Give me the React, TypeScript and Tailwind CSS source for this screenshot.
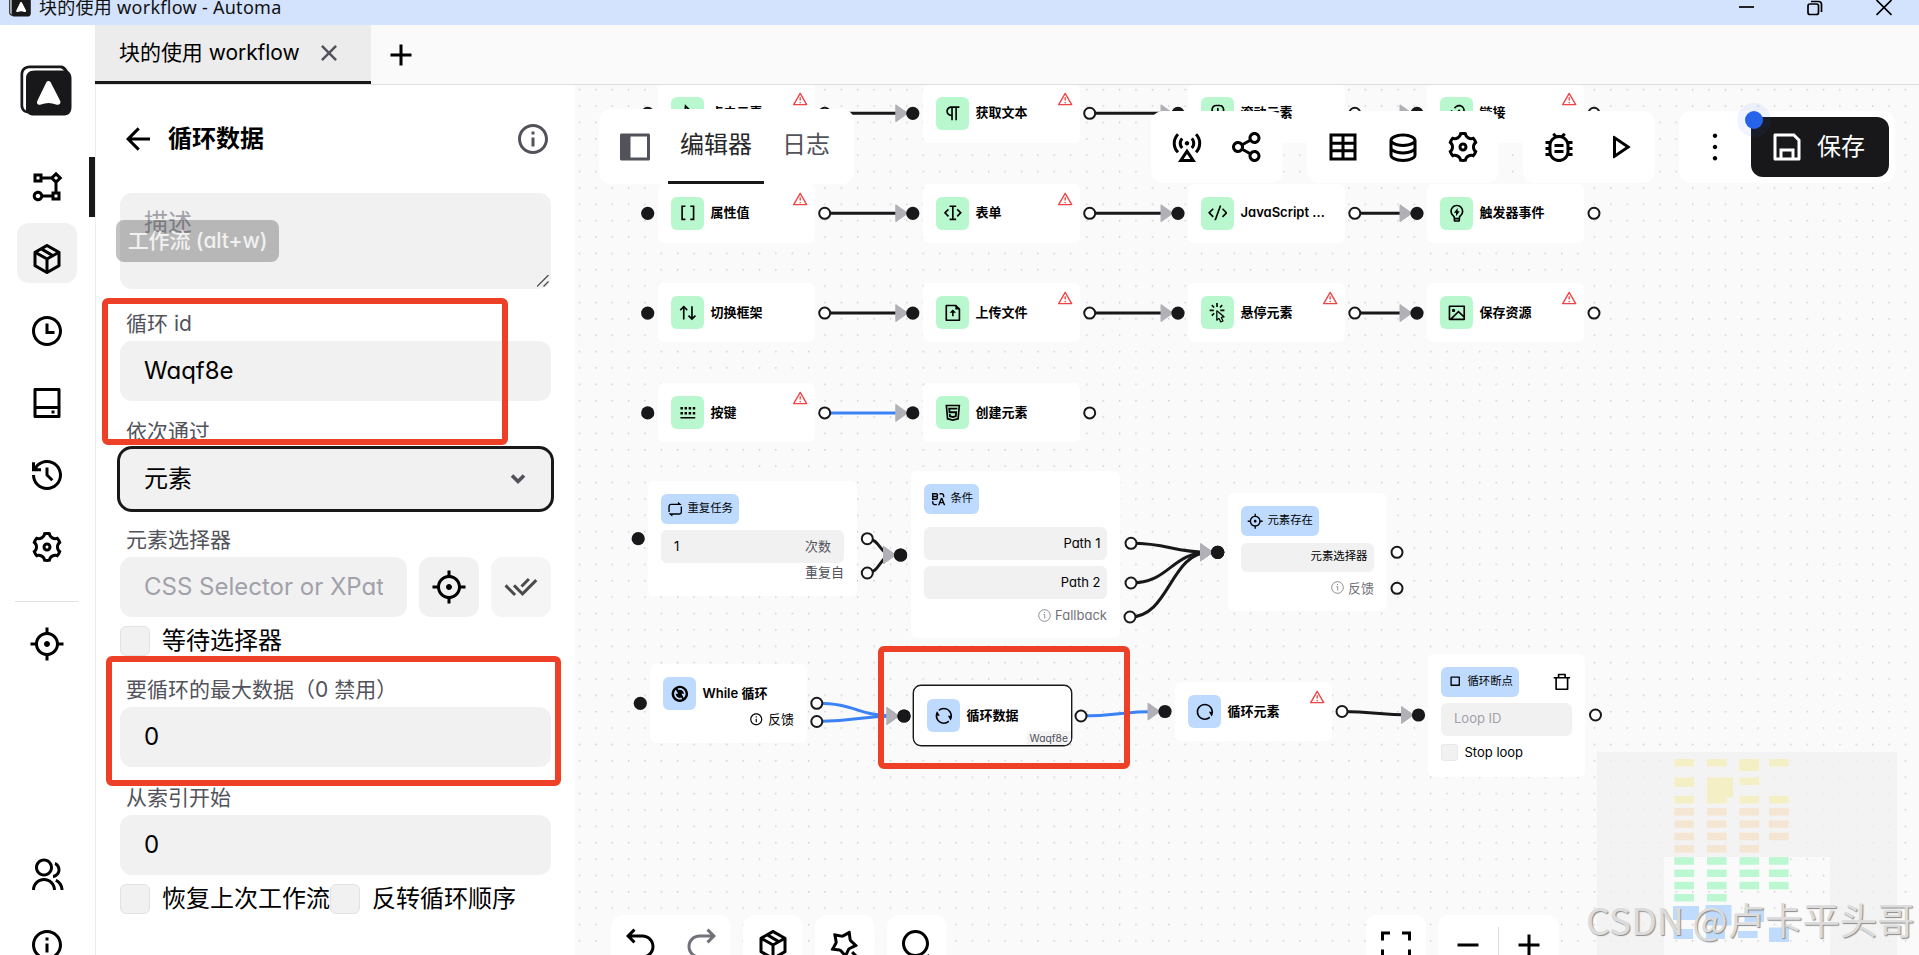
import React from 'react';
import clsx from 'clsx';
import type { IconType } from 'react-icons';
import {
  RiAB, RiAddLine, RiAlertLine, RiArrowGoBackLine, RiArrowGoForwardLine, RiArrowLeftLine, RiArrowUpDownLine,
  RiBaseStationLine, RiBracketsLine, RiBug2Line, RiCheckDoubleLine, RiCloseLine, RiCodeSSlashLine,
  RiCursorLine, RiDatabase2Line, RiDeleteBin7Line, RiFileUploadLine, RiFlowChart, RiFocus3Line,
  RiFullscreenLine, RiGroupLine, RiHardDrive2Line, RiHistoryLine, RiHtml5Line, RiImageLine,
  RiInformationLine, RiInputCursorMove, RiKeyboardLine, RiLightbulbFlashLine, RiLink, RiMagicLine,
  RiMore2Line, RiMouseLine, RiParagraph, RiPlayLine, RiRefreshFill, RiRefreshLine, RiRepeat2Line,
  RiRestartLine, RiSaveLine, RiSearch2Line, RiSettings3Line, RiShareLine, RiSideBarFill, RiStopLine,
  RiSubtractLine, RiTimeLine,
} from 'react-icons/ri';

interface IconProps {
  size?: number | string;
  className?: string;
}

type AnyIcon = IconType | React.FC<IconProps>;

// Window position of the canvas' top left corner
const ORIGIN = { x: 575, y: 85 };

const place = (x: number, y: number, w: number, h: number): React.CSSProperties => ({
  left: x - ORIGIN.x,
  top: y - ORIGIN.y,
  width: w,
  height: h,
});

const PackageIcon: React.FC<IconProps> = ({ size = 24, className }) => (
  <svg width={size} height={size} viewBox="0 0 24 24" fill="currentColor" className={className}>
    <path d="M21,16.5C21,16.88 20.79,17.21 20.47,17.38L12.57,21.82C12.41,21.94 12.21,22 12,22C11.79,22 11.59,21.94 11.43,21.82L3.53,17.38C3.21,17.21 3,16.88 3,16.5V7.5C3,7.12 3.21,6.79 3.53,6.62L11.43,2.18C11.59,2.06 11.79,2 12,2C12.21,2 12.41,2.06 12.57,2.18L20.47,6.62C20.79,6.79 21,7.12 21,7.5V16.5M12,4.15L10.11,5.22L16,8.61L17.96,7.5L12,4.15M6.04,7.5L12,10.85L13.96,9.75L8.08,6.35L6.04,7.5M5,15.91L11,19.29V12.58L5,9.21V15.91M19,15.91V9.21L13,12.58V19.29L19,15.91Z" />
  </svg>
);

const CursorClickIcon: React.FC<IconProps> = ({ size = 24, className }) => (
  <svg width={size} height={size} viewBox="0 0 24 24" fill="currentColor" className={className}>
    <path d="M11.5,11L17.88,16.37L17,16.55L16.36,16.67C15.73,16.8 15.37,17.5 15.65,18.07L15.92,18.65L17.28,21.59L15.86,22.25L14.5,19.32L14.24,18.74C13.97,18.15 13.22,17.97 12.72,18.38L12.21,18.78L11.5,19.35V11M10.76,8.69A0.76,0.76 0 0,0 10,9.45V20.9C10,21.32 10.34,21.66 10.76,21.66C10.95,21.66 11.11,21.6 11.24,21.5L13.15,19.95L14.81,23.57C14.94,23.84 15.21,24 15.5,24C15.61,24 15.72,24 15.83,23.92L18.59,22.64C18.97,22.46 19.15,22 18.95,21.63L17.28,18L19.69,17.55C19.85,17.5 20,17.43 20.12,17.29C20.39,16.97 20.35,16.5 20,16.21L11.26,8.86L11.25,8.87C11.12,8.76 10.95,8.69 10.76,8.69M15,10V8H20V10H15M13.83,4.76L16.66,1.93L18.07,3.34L15.24,6.17L13.83,4.76M10,0H12V5H10V0M3.93,14.66L6.76,11.83L8.17,13.24L5.34,16.07L3.93,14.66M3.93,3.34L5.34,1.93L8.17,4.76L6.76,6.17L3.93,3.34M7,10H2V8H7V10" />
  </svg>
);

const GridIcon: React.FC<IconProps> = ({ size = 24, className }) => (
  <svg width={size} height={size} viewBox="0 0 24 24" fill="none" stroke="currentColor" strokeWidth={2} className={className}>
    <path d="M4 4h16v16H4zM4 9.5h16M4 14.5h16M12 4v16" />
  </svg>
);

const Logo: React.FC<{ className?: string }> = ({ className }) => (
  <svg viewBox="0 0 52 51" className={className}>
    <path d="M10 .5h30c4 0 6 2 8 5.500c3 2 3.500 5 3.500 8v28c0 6-3 8.500-8.500 8.500H14c-3 0-4.500-.5-6-2C3 47.500.5 45 .5 40V10C.5 4 4 .5 10 .5z" fill="#18181b" />
    <path d="M10 3.200h29c2 0 3.500.6 5 2.300H15C8.500 5.500 6 8.500 6 14v31.500c-2-1.200-2.800-3-2.800-5.500V10C3.200 5.500 5.500 3.200 10 3.200z" fill="#fff" />
    <path d="M26.500 17c.8-1.500 3.200-1.500 4 0L40 35.500c1.500 3-1 5-4 4-5-2-10-2-15 0-3 1-5-1-3.500-4z" fill="#fff" />
  </svg>
);

const TitleBar = () => (
  <header className="h-[25px] shrink-0 flex items-start justify-between overflow-hidden bg-[#d3e3fd] pl-[9px] pr-[27px]">
    <div className="flex items-start gap-[8px]">
      <Logo className="-mt-[5px] h-[22px] w-[22px]" />
      <span className="-mt-[5px] whitespace-nowrap text-[18px] leading-[24px] tracking-[0.28px] text-[#111] font-['Noto_Sans','Noto_Sans_CJK_SC',sans-serif]">
        块的使用 workflow - Automa
      </span>
    </div>
    <div className="flex h-4 items-center gap-[53px]">
      <svg width="15" height="16" viewBox="0 0 15 16" stroke="#000" strokeWidth="1.700">
        <path d="M0 7h15" />
      </svg>
      <svg width="16" height="16" viewBox="0 0 16 16" fill="none" stroke="#000" strokeWidth="1.700">
        <rect x="1" y="4" width="10.500" height="10.500" rx="2" />
        <path d="M4 1.500h7.500a3 3 0 0 1 3 3V12" />
      </svg>
      <svg width="16" height="16" viewBox="0 0 16 16" stroke="#000" strokeWidth="1.700">
        <path d="M.5 0l15 15M15.500 0l-15 15" />
      </svg>
    </div>
  </header>
);

const navItems: { icon: AnyIcon; active?: boolean; hovered?: boolean }[] = [
  { icon: RiFlowChart, active: true },
  { icon: PackageIcon, hovered: true },
  { icon: RiTimeLine },
  { icon: RiHardDrive2Line },
  { icon: RiHistoryLine },
  { icon: RiSettings3Line },
];

const Sidebar = () => (
  <aside className="w-24 shrink-0 flex flex-col overflow-hidden border-r border-[#ececec] bg-white pt-10">
    <Logo className="ml-[20px] h-[51px] w-[52px] shrink-0" />
    <nav className="mt-[41px] flex flex-col gap-[12px]">
      {navItems.map(({ icon: Icon, active, hovered }, i) => (
        <div key={i} className="flex h-[60px] shrink-0 items-center justify-between pl-[17px]">
          <div className={clsx('flex h-[60px] w-[60px] items-center justify-center rounded-xl', hovered && '-translate-y-1.5 bg-[#f1f1f1]')}>
            <Icon size={36} className={clsx(hovered && 'translate-y-1.5')} />
          </div>
          {active && <div className="h-[60px] w-[6px] bg-[#18181b]" />}
        </div>
      ))}
    </nav>
    <hr className="mx-[15px] mt-[24px] w-[63px] shrink-0 border-[#e0e0e0]" />
    <RiFocus3Line size={36} className="ml-[29px] mt-[24px] shrink-0" />
    <RiGroupLine size={36} className="ml-[29px] mt-[195px] shrink-0" />
    <RiInformationLine size={36} className="ml-[29px] mt-[34px] shrink-0" />
  </aside>
);

const TabBar = () => (
  <div className="-ml-px h-[60px] shrink-0 flex border-b border-[#dedede] bg-[#fafafa]">
    <div className="flex h-[59px] w-[276px] items-center border-b-[3px] border-[#18181b] bg-[#ececec] pl-6">
      <span className="whitespace-nowrap text-[21px] tracking-[-0.05px]">块的使用 workflow</span>
      <RiCloseLine size={30} className="ml-[14.500px] text-[#52525b]" />
    </div>
    <RiAddLine size={36} className="ml-3 mt-[12px]" />
  </div>
);

const Label: React.FC<{ children: React.ReactNode; className?: string }> = ({ children, className }) => (
  <div className={clsx('flex h-12 shrink-0 items-end whitespace-nowrap pb-[2px] pl-1.5 text-[21px] leading-[30px] text-[#52525b]', className)}>
    {children}
  </div>
);

const Field: React.FC<{ children: React.ReactNode; className?: string }> = ({ children, className }) => (
  <div className={clsx('flex h-[60px] shrink-0 items-center justify-between overflow-hidden whitespace-nowrap rounded-xl bg-[#f1f1f1] px-6 text-2xl', className)}>
    {children}
  </div>
);

const Checkbox: React.FC<{ label: string; className?: string }> = ({ label, className }) => (
  <div className={clsx('flex h-[30px] items-center whitespace-nowrap text-2xl', className)}>
    <span className="mr-3 h-[30px] w-[30px] shrink-0 rounded-md border border-[#e2e2e2] bg-[#f1f1f1]" />
    {label}
  </div>
);

const EditPanel = () => (
  <section className="relative w-[479px] shrink-0 overflow-hidden bg-white px-6">
    <div className="flex h-[108px] items-center">
      <RiArrowLeftLine size={36} />
      <h1 className="ml-3 flex-1 text-2xl font-semibold">循环数据</h1>
      <RiInformationLine size={36} className="text-[#52525b]" />
    </div>
    <div className="relative h-24 rounded-xl bg-[#f1f1f1] px-6 pt-[14px] text-2xl leading-[32px] text-[#a1a1aa]">
      描述
      <svg className="absolute bottom-0.5 right-0.5" width="12" height="12" viewBox="0 0 12 12" stroke="#444" strokeWidth="1.200">
        <path d="M0 11.500L11.500 0M6.500 11.500l5-5" />
      </svg>
      <div className="absolute -left-1 top-[27px] flex h-[42px] w-[163px] items-center justify-center whitespace-nowrap rounded-lg bg-black/24 text-[21px] font-medium tracking-[-0.1px] text-white/80">
        工作流 (alt+w)
      </div>
    </div>
    <Label className="mt-1">循环 id</Label>
    <Field>Waqf8e</Field>
    <Label>依次通过</Label>
    <Field className="ring-3 ring-[#18181b]">
      元素
      <svg width="16" height="12" viewBox="0 0 16 12" fill="none" stroke="#52525b" strokeWidth="3.600" className="mr-px">
        <path d="M2 2.500l6 6 6-6" />
      </svg>
    </Field>
    <Label>元素选择器</Label>
    <div className="flex gap-3">
      <div className="h-[60px] flex-1 overflow-hidden rounded-xl bg-[#f1f1f1] px-6">
        <div className="overflow-hidden whitespace-nowrap text-2xl leading-[60px] text-[#a1a1aa]">CSS Selector or XPat</div>
      </div>
      <div className="flex h-[60px] w-[60px] items-center justify-center rounded-xl bg-[#f1f1f1]">
        <RiFocus3Line size={36} />
      </div>
      <div className="flex h-[60px] w-[60px] items-center justify-center rounded-xl bg-[#f1f1f1] opacity-70">
        <RiCheckDoubleLine size={36} />
      </div>
    </div>
    <Checkbox label="等待选择器" className="mt-[9px]" />
    <Label className="mt-[3px]">要循环的最大数据（0 禁用）</Label>
    <Field>0</Field>
    <Label>从索引开始</Label>
    <Field>0</Field>
    <div className="mt-[9px] flex">
      <Checkbox label="恢复上次工作流" className="w-[210px]" />
      <Checkbox label="反转循环顺序" />
    </div>
  </section>
);

interface BlockProps {
  x: number;
  y: number;
  icon: AnyIcon;
  title: string;
  alert?: boolean;
}

const blocks: BlockProps[] = [
  { x: 658, y: 83.5, icon: RiCursorLine, title: '点击元素', alert: true },
  { x: 923, y: 83.5, icon: RiParagraph, title: '获取文本', alert: true },
  { x: 1188, y: 83.5, icon: RiMouseLine, title: '滚动元素' },
  { x: 1427, y: 83.5, icon: RiLink, title: '链接', alert: true },
  { x: 658, y: 183.5, icon: RiBracketsLine, title: '属性值', alert: true },
  { x: 923, y: 183.5, icon: RiInputCursorMove, title: '表单', alert: true },
  { x: 1188, y: 183.5, icon: RiCodeSSlashLine, title: 'JavaScript ...' },
  { x: 1427, y: 183.5, icon: RiLightbulbFlashLine, title: '触发器事件' },
  { x: 658, y: 283.3, icon: RiArrowUpDownLine, title: '切换框架' },
  { x: 923, y: 283.3, icon: RiFileUploadLine, title: '上传文件', alert: true },
  { x: 1188, y: 283.3, icon: CursorClickIcon, title: '悬停元素', alert: true },
  { x: 1427, y: 283.3, icon: RiImageLine, title: '保存资源', alert: true },
  { x: 658, y: 383.3, icon: RiKeyboardLine, title: '按键', alert: true },
  { x: 923, y: 383.3, icon: RiHtml5Line, title: '创建元素' },
];

const BlockIcon: React.FC<{ icon: AnyIcon; className: string }> = ({ icon: Icon, className }) => (
  <div className={clsx('flex h-[33px] w-[33px] shrink-0 items-center justify-center rounded-md', className)}>
    <Icon size={19.7} />
  </div>
);

const AlertMark = () => <RiAlertLine size={16.4} className="absolute right-[6.500px] top-[7px] text-[#ef4444]" />;

const Block: React.FC<BlockProps> = ({ x, y, icon, title, alert }) => (
  <div className="absolute flex items-center gap-[6.500px] rounded-md bg-white pl-[13px]" style={place(x, y, 157, 59)}>
    <BlockIcon icon={icon} className="bg-green-200" />
    <span className="whitespace-nowrap text-[13px] font-semibold">{title}</span>
    {alert && <AlertMark />}
  </div>
);

const Tag: React.FC<{ icon: AnyIcon; children: React.ReactNode }> = ({ icon: Icon, children }) => (
  <div className="flex h-[30px] w-fit items-center gap-[4px] whitespace-nowrap rounded-md bg-blue-200 px-[6px] text-[11.400px]">
    <Icon size={16.4} />
    <span>{children}</span>
  </div>
);

const Fallback: React.FC<{ children: React.ReactNode }> = ({ children }) => (
  <div className="flex items-center justify-end gap-1 text-[13px] leading-5 text-[#71717a]">
    <svg width="13" height="13" viewBox="0 0 13 13" fill="none" stroke="currentColor" strokeWidth=".8">
      <circle cx="6.500" cy="6.500" r="5.800" />
      <path d="M5.500 5.500h1.200v4M6.500 3v1" />
    </svg>
    {children}
  </div>
);

const LargeBlocks = () => (
  <>
    <div className="absolute rounded-md bg-white p-[13px]" style={place(648, 481, 209, 115)}>
      <Tag icon={RiRepeat2Line}>重复任务</Tag>
      <div className="mt-[6px] flex h-[33px] items-center justify-between rounded-md bg-[#f1f1f1] px-[13px] text-[13px]">
        <span>1</span>
        <span className="text-[#52525b]">次数</span>
      </div>
      <div className="text-right text-[13px] leading-[18px] text-[#52525b]">重复自</div>
    </div>

    <div className="absolute rounded-md bg-white p-[13px]" style={place(911, 471, 209, 167)}>
      <Tag icon={RiAB}>条件</Tag>
      <div className="mt-[13px] flex flex-col gap-[6px]">
        {['Path 1', 'Path 2'].map((path) => (
          <div key={path} className="flex h-[33px] items-center justify-end rounded-md bg-[#f1f1f1] px-[6.500px] text-[13px]">
            {path}
          </div>
        ))}
      </div>
      <div className="mt-1.5">
        <Fallback>Fallback</Fallback>
      </div>
    </div>

    <div className="absolute rounded-md bg-white p-[13px]" style={place(1228, 493, 159, 118)}>
      <Tag icon={RiFocus3Line}>元素存在</Tag>
      <div className="mt-[6.500px] flex h-[29px] items-center justify-end rounded-md bg-[#f1f1f1] px-[6.500px] text-[11.400px]">
        元素选择器
      </div>
      <div className="mt-1.5">
        <Fallback>反馈</Fallback>
      </div>
    </div>

    <div className="absolute rounded-md bg-white p-[13px]" style={place(650, 664, 157, 79)}>
      <div className="flex items-center gap-[6.500px]">
        <BlockIcon icon={RiRefreshFill} className="bg-blue-200" />
        <span className="whitespace-nowrap text-[13px] font-semibold">While 循环</span>
      </div>
      <div className="flex items-center justify-end gap-1 text-[13px] leading-[18px]">
        <RiInformationLine size={14.5} />
        反馈
      </div>
    </div>

    <div
      className="absolute flex items-center gap-[6.500px] overflow-hidden rounded-lg border border-[#18181b] bg-white pl-[13px] shadow-[0_0_0_0.4px_#18181b]"
      style={place(913, 685, 159, 61)}
    >
      <BlockIcon icon={RiRefreshLine} className="bg-blue-200" />
      <span className="text-[13px] font-semibold">循环数据</span>
      <span className="absolute bottom-0 right-0 rounded-tl-sm bg-[#f4f4f5] px-[3px] text-[10.300px] leading-[14px] text-[#52525b]">Waqf8e</span>
    </div>

    <div className="absolute flex items-center gap-[6.500px] rounded-md bg-white pl-[13px]" style={place(1175, 682, 157, 59)}>
      <BlockIcon icon={RiRestartLine} className="bg-blue-200" />
      <span className="text-[13px] font-semibold">循环元素</span>
      <AlertMark />
    </div>

    <div className="absolute rounded-md bg-white p-[13px]" style={place(1428, 653.5, 157, 123)}>
      <div className="flex items-center justify-between">
        <Tag icon={RiStopLine}>循环断点</Tag>
        <RiDeleteBin7Line size={19.7} />
      </div>
      <div className="mt-[6px] flex h-[33px] items-center rounded-md bg-[#f1f1f1] px-[13px] text-[13px] text-[#a1a1aa]">Loop ID</div>
      <div className="mt-2 flex items-center gap-[6.500px] text-[13px] leading-[17px]">
        <span className="h-[17px] w-[17px] rounded-[3px] border border-[#e8e8e8] bg-[#f1f1f1]" />
        Stop loop
      </div>
    </div>
  </>
);

type Edge = { from: [number, number]; to: [number, number]; blue?: boolean };

const edges: Edge[] = [
  ...[113.3, 213.3, 313.1].flatMap((y): Edge[] => [
    { from: [824.7, y], to: [912.8, y] },
    { from: [1089.7, y], to: [1178, y] },
    { from: [1354.8, y], to: [1417, y] },
  ]),
  { from: [824.7, 412.9], to: [912.8, 412.9], blue: true },
  { from: [867.3, 538.7], to: [900.6, 555] },
  { from: [867.3, 573], to: [900.6, 555] },
  { from: [1131, 543.3], to: [1217.7, 552.3] },
  { from: [1131, 583], to: [1217.7, 552.3] },
  { from: [1130, 617], to: [1217.7, 552.3] },
  { from: [816.8, 703.3], to: [904, 716], blue: true },
  { from: [816.8, 721.5], to: [904, 716], blue: true },
  { from: [1081, 716], to: [1165, 711.5], blue: true },
  { from: [1342, 711.5], to: [1418.5, 715] },
];

const inputs: [number, number][] = [
  [647.7, 113.3], [647.7, 213.3], [647.7, 313.1], [647.7, 412.9], [638.2, 538.7], [640.3, 703.3],
];
const outputs: [number, number][] = [
  [1594, 113.3], [1594, 213.3], [1594, 313.1], [1089.7, 412.9], [1397, 552.3], [1397, 588.3], [1595.5, 715],
];

const edgePath = ({ from: [x1, y1], to: [x2, y2] }: Edge) => {
  const end = x2 - 8;
  const mid = (x1 + end) / 2;
  return `M${x1} ${y1}C${mid} ${y1} ${mid} ${y2} ${end} ${y2}`;
};

const EdgeLayer = () => (
  <svg className="absolute inset-0" width="1344" height="870" viewBox="575 85 1344 870">
    <defs>
      <pattern id="dots" x="578.800" y="88.900" width="16.370" height="16.370" patternUnits="userSpaceOnUse">
        <circle cx=".75" cy=".75" r=".62" fill="#9b9ba3" />
      </pattern>
    </defs>
    <rect x="575" y="85" width="1344" height="870" fill="url(#dots)" />
    {edges.map((edge, i) => (
      <path key={i} d={edgePath(edge)} fill="none" stroke={edge.blue ? '#3b82f6' : '#18181b'} strokeWidth="3" />
    ))}
    {edges.map(({ to: [x, y] }, i) => (
      <path key={i} d={`M${x - 17} ${y - 8.5}L${x - 5} ${y}L${x - 17} ${y + 8.5}z`} fill="#b0b0b6" stroke="#b0b0b6" strokeLinejoin="round" />
    ))}
    {[...inputs, ...edges.map((edge) => edge.to)].map(([cx, cy], i) => (
      <circle key={i} cx={cx} cy={cy} r="6.600" fill="#18181b" />
    ))}
    {[...outputs, ...edges.map((edge) => edge.from)].map(([cx, cy], i) => (
      <circle key={i} cx={cx} cy={cy} r="5.500" fill="#fff" stroke="#18181b" strokeWidth="2" />
    ))}
  </svg>
);

const YELLOW = '#f5efc6';
const ORANGE = '#f5e6d3';
const GREEN = '#bbf7d0';
const BLUE = '#bfdbfe';
const mapColumns = [1674.3, 1707, 1739.5, 1769];

const mapRow = (y: number, columns: number, fill: string) =>
  mapColumns.slice(0, columns).map((x) => ({ x, y, w: 19.6, h: 7.5, fill }));

const mapNodes = [
  ...mapRow(759, 4, YELLOW),
  { x: 1739.5, y: 759, w: 19.6, h: 12, fill: YELLOW },
  { x: 1674.3, y: 777.5, w: 19.6, h: 9.5, fill: YELLOW },
  { x: 1707, y: 777.5, w: 26, h: 20, fill: YELLOW },
  { x: 1739.5, y: 777.5, w: 19.6, h: 7.5, fill: YELLOW },
  ...mapRow(796, 4, YELLOW),
  ...mapRow(808, 4, ORANGE),
  ...mapRow(820.3, 4, ORANGE),
  ...mapRow(832.7, 4, ORANGE),
  ...mapRow(845, 3, ORANGE),
  ...mapRow(857.2, 4, GREEN),
  ...mapRow(869.5, 4, GREEN),
  ...mapRow(881.8, 4, GREEN),
  ...mapRow(894, 2, GREEN),
  { x: 1673, y: 906, w: 26, h: 14, fill: BLUE },
  { x: 1705.5, y: 905, w: 26, h: 20.5, fill: BLUE },
  { x: 1744.5, y: 908, w: 19.6, h: 14, fill: BLUE },
  { x: 1673.5, y: 929, w: 19.6, h: 10, fill: BLUE },
  { x: 1706, y: 931, w: 19, h: 8, fill: BLUE },
  { x: 1738, y: 931, w: 19.6, h: 7, fill: BLUE },
  { x: 1769, y: 927.5, w: 20, h: 14.5, fill: BLUE },
];

const MiniMap = () => (
  <svg className="absolute bottom-0 right-[22px]" width="300" height="203" viewBox="1597 752 300 203">
    <path fillRule="evenodd" d="M1597 752h300v203h-300zM1664 857v98h166v-98z" fill="#f0f0f0" fillOpacity=".75" />
    {mapNodes.map(({ x, y, w, h, fill }, i) => (
      <rect key={i} x={x} y={y} width={w} height={h} fill={fill} />
    ))}
  </svg>
);

const IconGroup: React.FC<{ icons: AnyIcon[] }> = ({ icons }) => (
  <div className="flex h-[72px] items-center rounded-xl bg-white px-1.5">
    {icons.map((Icon, i) => (
      <span key={i} className="flex w-[60px] justify-center">
        <Icon size={36} />
      </span>
    ))}
  </div>
);

const TopBar = () => (
  <div className="absolute left-6 right-6 top-6 flex items-start justify-between">
    <div className="flex h-[75px] w-[255px] items-start rounded-xl bg-white pl-[18px]">
      <RiSideBarFill size={36} className="mt-5 text-[#52525b]" />
      <div className="ml-[15px] h-[75px] w-24 border-b-[3px] border-[#18181b] text-center text-2xl leading-[71px] text-[#27272a]">编辑器</div>
      <div className="ml-[18px] text-2xl leading-[71px] text-[#52525b]">日志</div>
    </div>
    <div className="mt-0.5 flex gap-6">
      <IconGroup icons={[RiBaseStationLine, RiShareLine]} />
      <IconGroup icons={[GridIcon, RiDatabase2Line, RiSettings3Line]} />
      <IconGroup icons={[RiBug2Line, RiPlayLine]} />
      <div className="flex h-[72px] w-[216px] items-center rounded-xl bg-white px-1.5">
        <span className="flex w-[60px] justify-center">
          <RiMore2Line size={36} />
        </span>
        <div className="relative ml-1.5 flex h-[60px] flex-1 items-center rounded-xl bg-[#18181b] pl-[18px] text-2xl text-white">
          <RiSaveLine size={36} />
          <span className="ml-3 whitespace-nowrap">保存</span>
          <span className="absolute -left-3.5 -top-3.5 flex h-[34px] w-[34px] items-center justify-center rounded-full bg-[#2563eb]/7">
            <span className="h-[18px] w-[18px] rounded-full bg-[#2563eb]" />
          </span>
        </div>
      </div>
    </div>
  </div>
);

const BottomBar = () => (
  <div className="absolute left-9 right-[360px] top-[830px] flex justify-between">
    <div className="flex gap-3">
      <div className="flex h-[60px] w-[120px] items-center justify-around rounded-xl bg-white">
        <RiArrowGoBackLine size={36} />
        <RiArrowGoForwardLine size={36} className="text-[#71717a]" />
      </div>
      {[PackageIcon, RiMagicLine, RiSearch2Line].map((Icon, i) => (
        <div key={i} className="flex h-[60px] w-[60px] items-center justify-center rounded-xl bg-white">
          <Icon size={36} />
        </div>
      ))}
    </div>
    <div className="flex gap-3">
      <div className="flex h-[60px] w-[60px] items-center justify-center rounded-xl bg-white">
        <RiFullscreenLine size={36} />
      </div>
      <div className="flex h-[60px] w-[121px] items-center rounded-xl bg-white px-3">
        <RiSubtractLine size={36} />
        <span className="mx-3 h-9 w-px bg-[#dedede]" />
        <RiAddLine size={36} />
      </div>
    </div>
  </div>
);

const Canvas = () => (
  <main className="relative flex-1 overflow-hidden bg-[#fafafa]">
    <EdgeLayer />
    {blocks.map((block) => (
      <Block key={block.title} {...block} />
    ))}
    <LargeBlocks />
    <MiniMap />
    <TopBar />
    <BottomBar />
  </main>
);

const Highlights = () => (
  <>
    <div className="absolute left-[102px] top-[298px] h-[147px] w-[406px] rounded-md border-[6px] border-[#ee4026]" />
    <div className="absolute left-[106px] top-[656px] h-[130px] w-[455px] rounded-md border-[6px] border-[#ee4026]" />
    <div className="absolute left-[878px] top-[646px] h-[123px] w-[252px] rounded-md border-[6px] border-[#ee4026]" />
  </>
);

export default function App() {
  return (
    <div className="relative h-[955px] w-[1919px] flex flex-col overflow-hidden bg-white text-black font-['Inter','Noto_Sans_CJK_SC',sans-serif] [font-feature-settings:'cv02','cv03','cv04','cv11']">
      <TitleBar />
      <div className="flex min-h-0 flex-1">
        <Sidebar />
        <div className="flex min-w-0 flex-1 flex-col">
          <TabBar />
          <div className="flex min-h-0 flex-1">
            <EditPanel />
            <Canvas />
          </div>
        </div>
      </div>
      <Highlights />
      <div className="absolute left-[1586px] top-[893px] whitespace-nowrap text-[37.400px] leading-[52px] text-[#dcdcdc] [text-shadow:1px_1px_1px_#8a8a8a] font-['Noto_Sans_CJK_SC',sans-serif]">
        CSDN @卢卡平头哥
      </div>
    </div>
  );
}
